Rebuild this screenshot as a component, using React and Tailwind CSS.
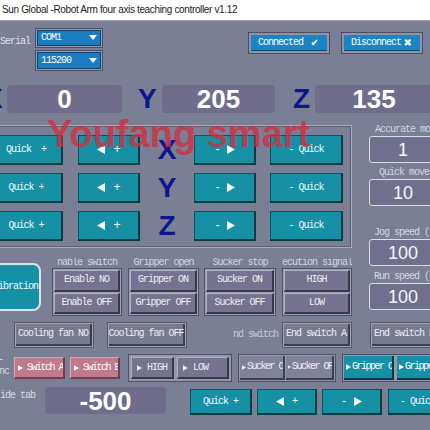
import React from "react";

const mono =
  "font-['Liberation_Mono','DejaVu_Sans_Mono',monospace] text-[10px] tracking-[-1px] whitespace-pre leading-none";

const monoTight =
  "font-['Liberation_Mono','DejaVu_Sans_Mono',monospace] text-[10px] tracking-[-1.5px] whitespace-pre leading-none";

function TriR({ w = 7, h = 8 }) {
  return (
    <svg width={w} height={h} viewBox="0 0 7 8" className="shrink-0">
      <path d="M0 0 L7 4 L0 8 Z" fill="currentColor" />
    </svg>
  );
}

function TriL({ w = 8, h = 9 }) {
  return (
    <svg width={w} height={h} viewBox="0 0 8 9" className="shrink-0">
      <path d="M8 0 L0 4.5 L8 9 Z" fill="currentColor" />
    </svg>
  );
}

function Drop({ value, className = "" }) {
  return (
    <div className={`shrink-0 border border-[#4b4e60] bg-[#9699ab] p-[1px] ${className}`}>
      <div className="h-full flex items-center bg-[#1b7cc2] border border-[#0e4470] pl-[3px] pr-[3px]">
        <span className={`${mono} text-white flex-1`}>{value}</span>
        <svg width="8" height="6" viewBox="0 0 8 6">
          <path d="M0 0 H8 L4 5 Z" fill="white" />
        </svg>
      </div>
    </div>
  );
}

function ConnBtn({ label, icon }) {
  return (
    <div className="shrink-0 w-[82px] h-[22px] border border-[#4b4e60] bg-[#9093a6] p-[2px]">
      <div className="h-full bg-[#1a85c4] border-b border-[#0e4a74] flex items-center justify-between pl-[7px] pr-[8px] text-white">
        <span className={mono}>{label}</span>
        <span className="font-['DejaVu_Sans',sans-serif] text-[10px] leading-none">{icon}</span>
      </div>
    </div>
  );
}

function ValueBox({ className = "", children }) {
  return (
    <div
      className={`shrink-0 bg-[#6f6d8b] rounded-[4px] flex items-center justify-center text-white font-['Liberation_Sans',sans-serif] font-bold text-[26px] leading-none ${className}`}
    >
      {children}
    </div>
  );
}

function Teal({ className = "", children }) {
  return (
    <div
      className={`shrink-0 flex items-center justify-center bg-[#1690a4] border border-[#0d5260] border-b-2 border-r-2 border-b-[#083a44] border-r-[#083a44] text-[#f2fbfc] ${mono} ${className}`}
    >
      {children}
    </div>
  );
}

function Bevel({ className = "", children }) {
  return (
    <div
      className={`flex items-center justify-center bg-[#75738f] border-t border-l border-t-[#b1b0c4] border-l-[#b1b0c4] border-b-2 border-r-2 border-b-[#38374b] border-r-[#38374b] text-[#f0f0f6] ${mono} ${className}`}
    >
      {children}
    </div>
  );
}

function Framed({ className = "", children }) {
  return (
    <div className={`shrink-0 border border-[#55586b] bg-[#a0a2b4] p-[1px] ${className}`}>
      <div
        className={`h-full flex items-center justify-center bg-[#787a90] border-b-2 border-r-2 border-b-[#3c3e51] border-r-[#3c3e51] text-[#eef0f6] ${mono}`}
      >
        {children}
      </div>
    </div>
  );
}

function Group({ label, className = "", children }) {
  return (
    <div className={`shrink-0 flex flex-col ${className}`}>
      <div className={`h-[10px] text-center text-[#d3d5e0] overflow-hidden ${mono}`}>{label}</div>
      <div className="h-[48px] border border-[#4f5266] bg-[#9ea0b2] p-[1px] flex flex-col gap-[1px]">
        {children}
      </div>
    </div>
  );
}

function Pink({ className = "", children }) {
  return (
    <div
      className={`shrink-0 flex items-center gap-[4px] pl-[3px] overflow-hidden bg-[#bf7a8d] border-t border-l border-t-[#dca7b5] border-l-[#dca7b5] border-b-2 border-r-2 border-b-[#6d4050] border-r-[#6d4050] text-white ${monoTight} ${className}`}
    >
      <TriR w={5} h={6} />
      {children}
    </div>
  );
}

function SideLabel({ className = "", children }) {
  return (
    <div className={`h-[11px] whitespace-nowrap text-[#d5d7e2] ${mono} ${className}`}>{children}</div>
  );
}

function SideValue({ children }) {
  return (
    <div className="h-[27px] w-[68px] shrink-0 rounded-[3px] border-[1.5px] border-[#dcdde6] bg-[#716f8e] flex items-center justify-center text-[#f6f6fa] font-['Liberation_Sans',sans-serif] text-[18px] leading-none">
      {children}
    </div>
  );
}

const axisCls =
  "shrink-0 font-['Liberation_Sans',sans-serif] font-bold text-[28px] leading-none text-[#0b168f]";

function JogRow({ axis, first }) {
  return (
    <div className="flex h-[30px] shrink-0">
      <Teal className="w-[73px]">{first ? "Quick  +" : "Quick +"}</Teal>
      <Teal className="ml-[15px] w-[62px] gap-[8px]">
        <TriL />
        <span className="text-[12px]">+</span>
      </Teal>
      <div className={`w-[54px] flex items-center justify-center ${axisCls}`}>{axis}</div>
      <Teal className="w-[62px] gap-[7px]">
        <span className="text-[12px]">-</span>
        <TriR w={8} h={9} />
      </Teal>
      <Teal className="ml-[14px] w-[73px]">- Quick</Teal>
    </div>
  );
}

export default function App() {
  return (
    <div className="relative w-[430px] h-[430px] overflow-hidden bg-[#7a7f96] font-['Liberation_Sans',sans-serif]">
      {/* window title */}
      <div className="h-[21px] bg-white border-b border-[#a4a6b0] flex items-center pl-[2px] text-[10px] tracking-[-0.35px] text-[#222] font-['Liberation_Sans',sans-serif] whitespace-nowrap leading-none">
        Sun Global -Robot Arm four axis teaching controller v1.12
      </div>

      {/* serial port + connection */}
      <div className="flex h-[59px]">
        <div className={`w-[35px] shrink-0 pt-[16px] text-[#e0e1ea] ${mono}`}>Serial</div>
        <div className="w-[68px] shrink-0 pt-[7px] flex flex-col gap-[2px]">
          <Drop value="COM1" className="h-[20px]" />
          <Drop value="115200" className="h-[21px]" />
        </div>
        <div className="ml-[145px] pt-[11px] flex gap-[11px] shrink-0">
          <ConnBtn label="Connected" icon="✔" />
          <ConnBtn label="Disconnect" icon="✖" />
        </div>
      </div>

      {/* coordinates */}
      <div className="flex items-center h-[28px] mt-[5px]">
        <div className={`-ml-[16px] w-[23px] ${axisCls}`}>X</div>
        <ValueBox className="w-[115px] h-full">0</ValueBox>
        <div className={`ml-[16px] w-[24px] ${axisCls}`}>Y</div>
        <ValueBox className="w-[113px] h-full">205</ValueBox>
        <div className={`ml-[18px] w-[22px] ${axisCls}`}>Z</div>
        <ValueBox className="w-[118px] h-full">135</ValueBox>
      </div>

      {/* jog panel, switch groups and move settings */}
      <div className="flex">
        <div className="-ml-[12px] w-[364px] shrink-0 flex flex-col">
          <div className="mt-[12px] h-[123px] border border-[#a9acbd]">
            <div className="h-full border border-[#5c5f73] pt-[8px] flex flex-col gap-[8px]">
              <JogRow axis="X" first />
              <JogRow axis="Y" />
              <JogRow axis="Z" />
            </div>
          </div>

          <div className="mt-[10px] flex items-start">
            <div
              className={`shrink-0 mt-[5px] h-[48px] w-[53px] rounded-[8px] border-2 border-[#d8e4ec] bg-[#1690a4] flex items-center justify-end overflow-hidden pr-[1px] text-[#f2fbfc] ${mono}`}
            >
              Calibration
            </div>
            <Group label="nable switch" className="ml-[11px] w-[70px]">
              <Bevel className="flex-1">Enable NO</Bevel>
              <Bevel className="flex-1">Enable OFF</Bevel>
            </Group>
            <Group label="Gripper open" className="ml-[6px] w-[71px]">
              <Bevel className="flex-1">Gripper ON</Bevel>
              <Bevel className="flex-1">Gripper OFF</Bevel>
            </Group>
            <Group label="Sucker stop" className="ml-[5px] w-[72px]">
              <Bevel className="flex-1">Sucker ON</Bevel>
              <Bevel className="flex-1">Sucker OFF</Bevel>
            </Group>
            <Group label="ecution signal" className="ml-[6px] w-[70px]">
              <Bevel className="flex-1">HIGH</Bevel>
              <Bevel className="flex-1">LOW</Bevel>
            </Group>
          </div>
        </div>

        <div className="ml-[17px] w-[68px] shrink-0 flex flex-col">
          <SideLabel className="mt-[12px] pl-[6px]">Accurate move(mm)</SideLabel>
          <SideValue>1</SideValue>
          <SideLabel className="mt-[5px] pl-[10px]">Quick move(mm)</SideLabel>
          <SideValue>10</SideValue>
          <SideLabel className="mt-[22px] pl-[5px]">Jog speed (50-100)</SideLabel>
          <SideValue>100</SideValue>
          <SideLabel className="mt-[6px] pl-[5px]">Run speed (50-100)</SideLabel>
          <SideValue>100</SideValue>
        </div>
      </div>

      {/* fan and end switches */}
      <div className="flex mt-[6px] h-[26px]">
        <Framed className="ml-[14px] w-[80px]">Cooling fan NO</Framed>
        <Framed className="ml-[13px] w-[80px]">Cooling fan OFF</Framed>
        <div className={`shrink-0 ml-[46px] w-[49px] flex items-center justify-end pr-[4px] text-[#c9cbd8] ${mono}`}>
          nd switch
        </div>
        <Framed className="w-[70px]">End switch A</Framed>
        <Framed className="ml-[18px] w-[70px]">End switch B</Framed>
      </div>

      {/* output triggers */}
      <div className="flex mt-[5px] h-[29px]">
        <div className={`w-[14px] shrink-0 flex flex-col text-[#d8dae4] ${mono}`}>
          <div className="-ml-[2px] mt-[2px] h-[10px]">-</div>
          <div className="-ml-[1px] mt-[2px] h-[10px]">nc</div>
        </div>
        <Pink className="mt-[4px] h-[22px] w-[51px]">Switch A</Pink>
        <Pink className="ml-[5px] mt-[4px] h-[22px] w-[50px]">Switch B</Pink>

        <div className="shrink-0 ml-[8px] mt-[1px] h-[28px] w-[104px] border border-[#4f5266] bg-[#9496a9] p-[2px] flex gap-[3px]">
          <Bevel className="w-[43px] gap-[5px] justify-start pl-[5px]">
            <TriR w={5} h={6} />
            HIGH
          </Bevel>
          <Bevel className="flex-1 gap-[5px] justify-start pl-[5px]">
            <TriR w={5} h={6} />
            LOW
          </Bevel>
        </div>

        <div className="shrink-0 ml-[6px] mt-[1px] h-[28px] w-[98px] border border-[#4f5266] bg-[#9496a9] p-[1px] flex gap-[1px]">
          <div className={`w-[45px] flex items-center gap-[1px] pl-[2px] overflow-hidden bg-[#80829a] border-b-2 border-r-2 border-b-[#3c3e51] border-r-[#3c3e51] text-[#f0f0f6] ${monoTight}`}>
            <TriR w={4} h={5} />
            Sucker ON
          </div>
          <div className={`flex-1 flex items-center gap-[1px] pl-[2px] overflow-hidden bg-[#80829a] border-b-2 border-r-2 border-b-[#3c3e51] border-r-[#3c3e51] text-[#f0f0f6] ${monoTight}`}>
            <TriR w={3} h={4} />
            Sucker OFF
          </div>
        </div>

        <div className="shrink-0 ml-[6px] mt-[1px] h-[28px] w-[110px] border border-[#4f5266] bg-[#9496a9] p-[1px] flex gap-[3px]">
          <div className={`w-[50px] flex items-center gap-[1px] pl-[2px] overflow-hidden bg-[#1690a4] border-b-2 border-r-2 border-b-[#083a44] border-r-[#083a44] text-white ${monoTight}`}>
            <TriR w={5} h={6} />
            Gripper ON
          </div>
          <div className={`flex-1 flex items-center gap-[1px] pl-[2px] overflow-hidden bg-[#1690a4] border-b-2 border-r-2 border-b-[#083a44] border-r-[#083a44] text-white ${monoTight}`}>
            <TriR w={5} h={6} />
            Gripper OFF
          </div>
        </div>
      </div>

      {/* slide rail */}
      <div className="flex mt-[5px]">
        <div className={`w-[45px] shrink-0 pt-[4px] text-[#d8dae4] ${mono}`}>ide tab</div>
        <ValueBox className="w-[121px] h-[27px]">-500</ValueBox>
        <Teal className="ml-[24px] mt-[2px] h-[26px] w-[62px]">Quick +</Teal>
        <Teal className="ml-[5px] mt-[2px] h-[26px] w-[60px] gap-[8px]">
          <TriL />
          <span>+</span>
        </Teal>
        <Teal className="ml-[5px] mt-[2px] h-[26px] w-[60px] gap-[8px]">
          <span>-</span>
          <TriR w={8} h={9} />
        </Teal>
        <Teal className="ml-[6px] mt-[2px] h-[26px] w-[60px]">- Quick</Teal>
      </div>

      {/* brand watermark */}
      <div className="absolute left-[47px] top-[115px] whitespace-nowrap font-['Liberation_Sans',sans-serif] font-bold text-[38px] leading-none text-[#d62c3c]/75 pointer-events-none">
        Youfang smart
      </div>
    </div>
  );
}
